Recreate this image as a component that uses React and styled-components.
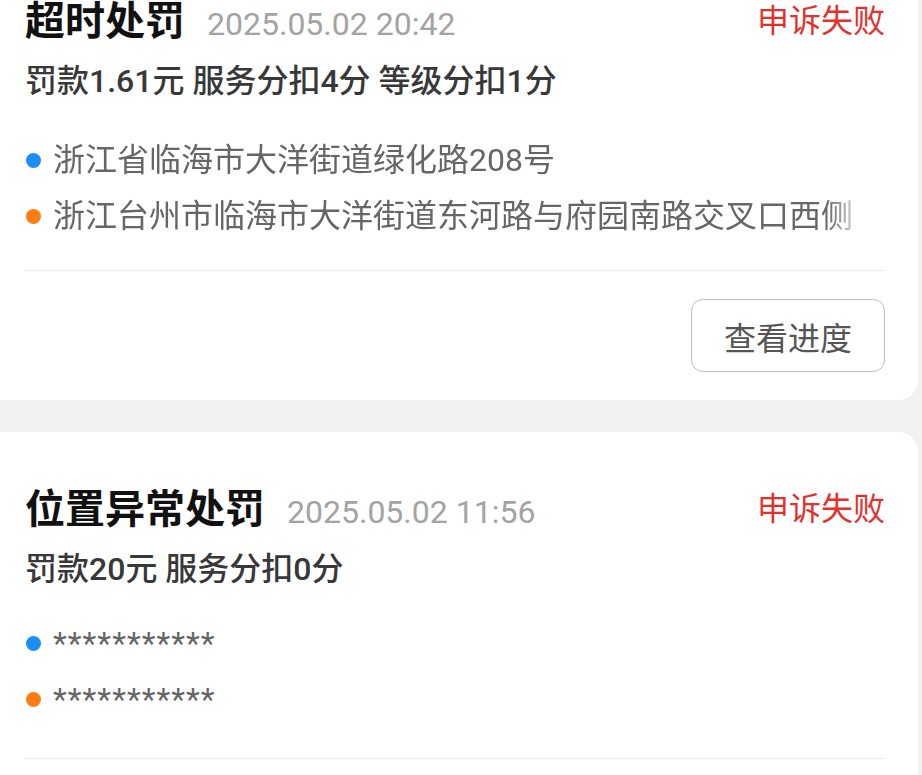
import React from 'react';
import styled, { createGlobalStyle } from 'styled-components';

const GlobalStyle = createGlobalStyle`
    html, body {
        margin: 0;
        padding: 0;
        background: #f2f2f2;
        overflow: hidden;
    }
    body {
        font-family: Roboto, 'Noto Sans CJK SC', sans-serif;
    }
`;

const Page = styled.div`
    display: flex;
    flex-direction: column;
    gap: 32px;
    margin-top: -56px;
`;

const Card = styled.div`
    background: #fff;
    margin-right: 4px;
    border-radius: 0 20px 20px 0;
    padding: 50px 33px 28px 25px;
    display: flex;
    flex-direction: column;
`;

const Header = styled.div`
    display: flex;
    align-items: center;
    justify-content: space-between;
    height: 48px;
`;

const TitleGroup = styled.div`
    display: flex;
    align-items: baseline;
`;

const Title = styled.span`
    font-family: 'Noto Sans CJK SC', sans-serif;
    font-weight: 700;
    font-size: 40px;
    line-height: 48px;
    color: #111;
`;

const Time = styled.span`
    font-family: Roboto, sans-serif;
    font-size: 32px;
    color: #a3a3a3;
    margin-left: 22px;
`;

const Status = styled.span`
    font-family: 'Noto Sans CJK SC', sans-serif;
    font-size: 32px;
    line-height: 44px;
    color: #e5302c;
`;

const Summary = styled.div`
    margin-top: 17px;
    font-family: Roboto, 'Noto Sans CJK SC', sans-serif;
    font-weight: 500;
    font-size: 32px;
    line-height: 44px;
    color: #383838;
`;

const AddressList = styled.div`
    margin-top: ${p => p.$top}px;
    display: flex;
    flex-direction: column;
`;

const AddressRow = styled.div`
    display: flex;
    align-items: center;
    height: 56px;
    width: 842px;
`;

const Dot = styled.span`
    flex: none;
    width: 15px;
    height: 15px;
    border-radius: 50%;
    margin: 0 12px 0 1px;
    background: ${p => (p.$kind === 'start' ? '#1b8ef5' : '#fd7d12')};
`;

const AddressText = styled.span`
    flex: 1;
    min-width: 0;
    font-family: Roboto, 'Noto Sans CJK SC', sans-serif;
    font-size: 32px;
    line-height: 44px;
    color: #666;
    white-space: nowrap;
    overflow: hidden;
    -webkit-mask-image: linear-gradient(to right, #000 calc(100% - 40px), transparent);
    mask-image: linear-gradient(to right, #000 calc(100% - 40px), transparent);
`;

const Masked = styled.span`
    font-family: Roboto, sans-serif;
    font-size: 32px;
    line-height: 44px;
    color: #666;
    letter-spacing: 1px;
`;

const Divider = styled.div`
    height: 1px;
    background: #ececec;
    margin-top: ${p => p.$top}px;
`;

const Actions = styled.div`
    display: flex;
    justify-content: flex-end;
    margin-top: 28px;
`;

const Button = styled.button`
    width: 194px;
    height: 73px;
    background: #fff;
    border: 1.5px solid #bdbdbd;
    border-radius: 12px;
    font-family: 'Noto Sans CJK SC', sans-serif;
    font-size: 32px;
    color: #555;
    padding: 0;
`;

const records = [
    {
        title: '超时处罚',
        time: '2025.05.02 20:42',
        status: '申诉失败',
        summary: '罚款1.61元 服务分扣4分 等级分扣1分',
        from: '浙江省临海市大洋街道绿化路208号',
        to: '浙江台州市临海市大洋街道东河路与府园南路交叉口西侧',
        masked: false,
    },
    {
        title: '位置异常处罚',
        time: '2025.05.02 11:56',
        status: '申诉失败',
        summary: '罚款20元 服务分扣0分',
        from: '***********',
        to: '***********',
        masked: true,
    },
];

const Record = ({ item }) => (
    <Card>
        <Header>
            <TitleGroup>
                <Title>{item.title}</Title>
                <Time>{item.time}</Time>
            </TitleGroup>
            <Status>{item.status}</Status>
        </Header>
        <Summary>{item.summary}</Summary>
        <AddressList $top={item.masked ? 24 : 29}>
            {[['start', item.from], ['end', item.to]].map(([kind, text]) => (
                <AddressRow key={kind}>
                    <Dot $kind={kind} />
                    {item.masked ? <Masked>{text}</Masked> : <AddressText>{text}</AddressText>}
                </AddressRow>
            ))}
        </AddressList>
        <Divider $top={item.masked ? 31 : 26} />
        <Actions>
            <Button>查看进度</Button>
        </Actions>
    </Card>
);

const App = () => (
    <>
        <GlobalStyle />
        <Page>
            {records.map(r => (
                <Record key={r.time} item={r} />
            ))}
        </Page>
    </>
);

export default App;
